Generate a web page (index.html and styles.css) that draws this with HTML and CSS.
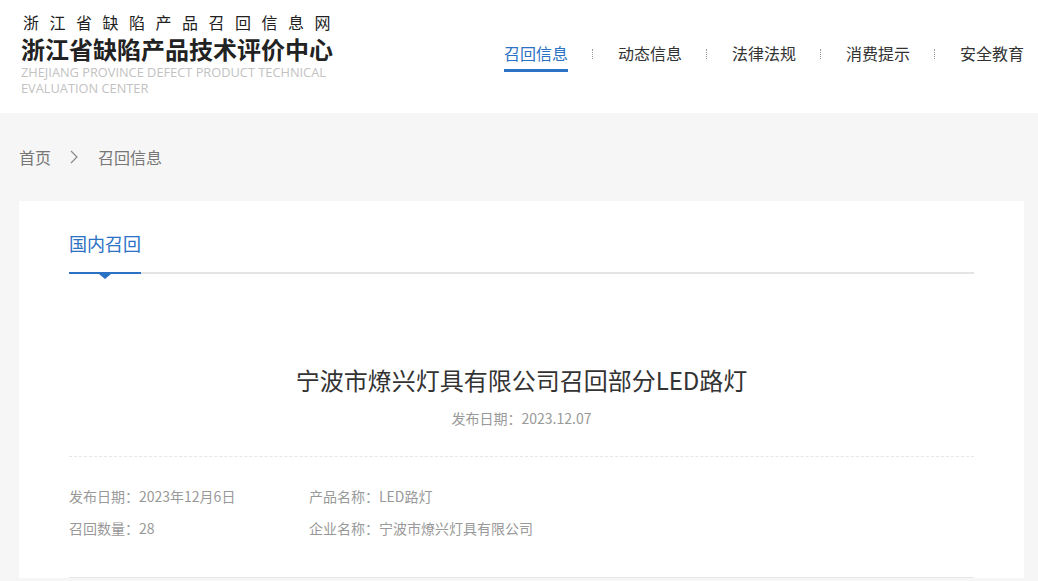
FILE: index.html
```html
<!DOCTYPE html>
<html lang="zh-CN">
  <head>
    <meta charset="UTF-8">
    <meta name="viewport" content="width=device-width, initial-scale=1.0">
    <title>宁波市燎兴灯具有限公司召回部分LED路灯</title>
    <link rel="stylesheet" href="styles.css">
  </head>
  <body>
    <div class="header">
      <div class="logo">
        <div class="logo-site">浙江省缺陷产品召回信息网</div>
        <div class="logo-name">浙江省缺陷产品技术评价中心</div>
        <div class="logo-en">ZHEJIANG PROVINCE DEFECT PRODUCT TECHNICAL<br>EVALUATION CENTER</div>
      </div>
      <ul class="nav">
        <li class="active"><a href="#">召回信息</a></li>
        <li class="sep"></li>
        <li><a href="#">动态信息</a></li>
        <li class="sep"></li>
        <li><a href="#">法律法规</a></li>
        <li class="sep"></li>
        <li><a href="#">消费提示</a></li>
        <li class="sep"></li>
        <li><a href="#">安全教育</a></li>
      </ul>
    </div>

    <div class="main">
      <div class="crumbs">
        <a href="#">首页</a>
        <svg class="chevron" width="8" height="14" viewBox="0 0 8 14"><polyline points="1,1 7,7 1,13" fill="none" stroke="#888" stroke-width="1.2"/></svg>
        <span>召回信息</span>
      </div>

      <div class="card">
        <div class="tabs">
          <div class="tab current">国内召回</div>
        </div>

        <h1 class="title">宁波市燎兴灯具有限公司召回部分LED路灯</h1>
        <p class="pubdate">发布日期：2023.12.07</p>

        <div class="info">
          <div class="info-row">
            <span class="info-cell">发布日期：2023年12月6日</span>
            <span class="info-cell">产品名称：LED路灯</span>
          </div>
          <div class="info-row">
            <span class="info-cell">召回数量：28</span>
            <span class="info-cell">企业名称：宁波市燎兴灯具有限公司</span>
          </div>
        </div>
      </div>
    </div>
  </body>
</html>
```

FILE: styles.css
```css
body {
  margin: 0;
  background: #f6f6f6;
  font-family: "Noto Sans CJK SC", "Noto Sans", sans-serif;
  color: #333;
}
a {
  color: inherit;
  text-decoration: none;
}
.header {
  display: flex;
  justify-content: space-between;
  height: 113px;
  padding: 0 14px 0 21px;
  background: #fff;
}
.logo {
  padding-top: 12px;
}
.logo-site {
  font-size: 16px;
  line-height: 20px;
  letter-spacing: 10.5px;
  padding-left: 2px;
  color: #222;
}
.logo-name {
  font-size: 24px;
  line-height: 26px;
  font-weight: bold;
  color: #222;
  margin-top: 4px;
}
.logo-en {
  margin-top: 2px;
  font-family: "Open Sans", "Noto Sans", sans-serif;
  font-size: 12.8px;
  line-height: 16px;
  color: #c2c2c2;
}
.nav {
  display: flex;
  align-items: flex-start;
  list-style: none;
  margin: 0;
  padding: 41px 0 0;
}
.nav li a {
  display: block;
  font-size: 16px;
  line-height: 24px;
  padding-bottom: 4px;
  border-bottom: 3px solid transparent;
}
.nav li.active a {
  color: #2b71c4;
  border-bottom-color: #2b71c4;
}
.nav .sep {
  width: 0;
  height: 10px;
  margin: 8px 25px 0 24px;
  border-left: 1px dotted #999;
}
.main {
  padding: 0 14px 0 19px;
}
.crumbs {
  display: flex;
  align-items: center;
  height: 88px;
  font-size: 16px;
  color: #777;
}
.chevron {
  margin: 0 20px 0 19px;
}
.card {
  background: #fff;
  padding: 30px 50px 0;
}
.tabs {
  position: relative;
  display: flex;
  border-bottom: 2px solid #e4e4e4;
}
.tab {
  position: relative;
  font-size: 18px;
  line-height: 24px;
  padding-bottom: 17px;
}
.tab.current {
  color: #2b71c4;
  border-bottom: 2px solid #2b71c4;
  margin-bottom: -2px;
}
.tab.current::after {
  content: "";
  position: absolute;
  left: 30px;
  bottom: -7px;
  border-left: 6px solid transparent;
  border-right: 6px solid transparent;
  border-top: 5px solid #2b71c4;
}
.title {
  margin: 88px 0 0;
  font-size: 24px;
  line-height: 36px;
  font-weight: normal;
  text-align: center;
  color: #333;
}
.pubdate {
  margin: 10px 0 0;
  font-size: 14px;
  line-height: 20px;
  text-align: center;
  color: #999;
}
.info {
  margin-top: 28px;
  border-top: 1px dashed #e6e6e6;
  border-bottom: 1px solid #e6e6e6;
  padding: 23px 0 33px;
}
.info-row {
  display: flex;
  font-size: 14px;
  line-height: 32px;
  color: #999;
}
.info-cell {
  width: 240px;
}
```
